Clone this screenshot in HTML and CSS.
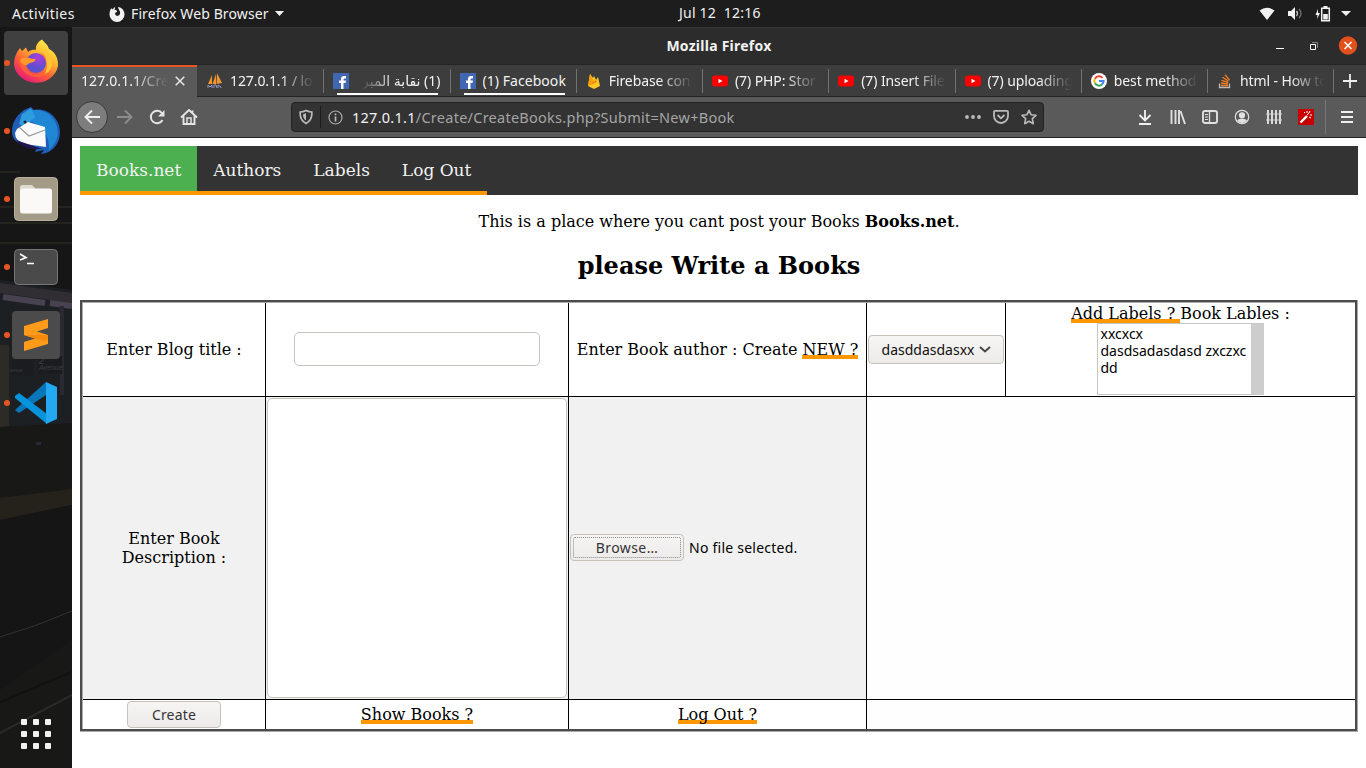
FILE: index.html
```html
<!DOCTYPE html>
<html lang="en">
<head>
<meta charset="utf-8">
<title>Mozilla Firefox</title>
<link rel="stylesheet" href="styles.css">
</head>
<body>
<div class="desktop">
<header class="topbar">
  <span class="activities">Activities</span>
  <svg class="ffmono" width="16" height="16" viewBox="0 0 16 16"><path d="M5.500 1C6.500 2 6 3 5 4C7 3.500 8 4.500 8 6C6.500 6 5.800 7 6.200 8.300C7.500 11.500 12 9.500 11 6C10.500 4 9.500 3.500 9 1C12 1 15.500 4 15.500 8.500A7.500 7.500 0 0 1 .5 8.500C.5 6 1 4 2.500 2L3 3.500C4 3 5 2 5.500 1Z" fill="#f2f2f2"/></svg>
  <span class="appname">Firefox Web Browser</span>
  <svg class="caret" width="9" height="5"><path d="M0 0H9L4.500 5Z" fill="#f2f2f2"/></svg>
  <span class="clock">Jul 12&nbsp; 12:16</span>
  <span class="tray">
    <svg width="16" height="16" viewBox="0 0 16 16"><path d="M.5 4.500Q8 -1 15.500 4.500L8 14Z" fill="#f2f2f2"/></svg>
    <svg width="16" height="16" viewBox="0 0 16 16"><path d="M1 5h3l4-4v13l-4-4H1Z" fill="#f2f2f2"/><path d="M9.500 5q2 2.500 0 5" fill="none" stroke="#ccc" stroke-width="1.300"/><path d="M12 3q4 4.500 0 9" fill="none" stroke="#777" stroke-width="1.200"/></svg>
    <svg width="16" height="18" viewBox="0 0 16 18"><path d="M3 4L.5 10h2l-.5 4 3-6H3Z" fill="#f2f2f2"/><path d="M6.700 3.200h7.600v12.600H6.700ZM8.500 1.700h4" fill="none" stroke="#f2f2f2" stroke-width="1.500"/><path d="M8.200 9h4.600v5.500H8.200Z" fill="#f2f2f2"/></svg>
    <svg class="traycaret" width="10" height="5"><path d="M0 0H10L5 5Z" fill="#f2f2f2"/></svg>
  </span>
</header>
<div class="body">
<aside class="dock">
  <svg class="wallpaper" width="72" height="741" viewBox="0 27 72 741">
    <path d="M0 27H72V768H0Z" fill="#161616"/>
    <path d="M0 172h20M0 207h72M0 223h72M0 243h72" stroke="#2b2921" stroke-width="1.500"/>
    <path d="M0 280L72 290V425L0 428Z" fill="#1d2023"/>
    <path d="M0 283L72 293V303L0 293Z" fill="#302e33"/>
    <path d="M3 297L45 303M50 303L72 306" stroke="#48414f" stroke-width="6"/>
    <path d="M62 306V395" stroke="#2a2830" stroke-width="4"/>
    <path d="M0 345H9V427H0Z" fill="#2c2b25"/>
    <path d="M12 360H34V376H12ZM38 356H62V374H38Z" fill="#1a1c1f"/>
    <text x="39" y="370" class="sign">Avenue</text><text x="9" y="372" class="sign small">venue</text><text x="39" y="364" class="sign two">2</text>
    <path d="M0 427L72 423V768H0Z" fill="#181816"/>
    <path d="M36 442h5v3h-5Z" fill="#252a3c"/>
    <path d="M0 498L72 489V505L0 520Z" fill="#25211b"/>
    <path d="M0 520L72 505V640L0 690Z" fill="#151515"/>
    <path d="M0 637Q35 627 72 611" fill="none" stroke="#333"/>
    <path d="M0 733L72 695" stroke="#2b2a26" stroke-width="2"/>
    <path d="M0 702L72 672" stroke="#121210" stroke-width="2"/>
  </svg>
  <div class="tile lit"><i class="dot"></i><svg width="48" height="48" viewBox="0 0 48 48">
    <defs><linearGradient id="fa" x1=".85" y1=".05" x2=".25" y2="1"><stop offset="0" stop-color="#fff44f"/><stop offset=".35" stop-color="#ffb52e"/><stop offset=".65" stop-color="#ff5c38"/><stop offset="1" stop-color="#e3147f"/></linearGradient><radialGradient id="fb" cx=".6" cy=".25"><stop offset="0" stop-color="#b13bdb"/><stop offset="1" stop-color="#5b50d0"/></radialGradient></defs>
    <path d="M30 .5C33 4 36 6 37 10C43 13 46.500 19 46 27A22.300 20.500 0 0 1 2 26C2 19 4 14 8 9L10 12L14 8.500L16 13C20 10 23 11 24 11C23 6 27 2 30 .5Z" fill="url(#fa)"/><path d="M7 20C12 16 19 20 24 20C22 24 18 23 15 26C14 35 27 39 33 31C37 25 31 18 28 13L36 18C40 30 34 39 24 38C13 37 7 29 7 20Z" fill="#ff6a33" opacity=".7"/><circle cx="24" cy="24" r="10" fill="url(#fb)"/><path d="M8 21C12 16 19 20 24 20.500C22 24 18 23 15 26Q10 27 8 21Z" fill="#ff9a2a"/><path d="M29 10Q36 12 39 18Q43 30 33 35Q37 25 33 17Z" fill="#ffc436"/></svg></div>
  <div class="tile"><i class="dot"></i><svg width="50" height="48" viewBox="0 0 50 48">
    <path d="M1 25C1 15 6 8 13 3L20 0L23 3C36 0 49 11 49 25C49 36 42 46 30 47L33 43L24 45L26 41C13 41 1 35 1 25Z" fill="#205db8"/><path d="M12 10C15 1 30 1 39 8C48 17 50 30 41 40L38 43Q40 22 12 10Z" fill="#2087d4"/><path d="M20 1L11 7L8 17L14 20L24 10Z" fill="#2d9de0"/><path d="M6 22L17 15L34 20L35 40L14 37Q4 34 4 26Z" fill="#fafafa"/><path d="M8 20L18 29L34 23" fill="none" stroke="#999" stroke-width="1.200"/><circle cx="14" cy="15" r="1.500" fill="#222"/><path d="M5 33L31 42L24 42Q11 42 5 33Z" fill="#20164d"/></svg></div>
  <div class="tile"><i class="dot"></i><svg width="44" height="44" viewBox="0 0 44 44"><rect x=".5" y=".5" width="43" height="43" rx="4" fill="#a39b86" stroke="#b9b19c"/><path d="M6 30V10Q6 8 8 8H18L21 11V16H6Z" fill="#dedacd"/><rect x="6" y="11.500" width="32" height="25" rx="2.500" fill="#faf9f7"/></svg></div>
  <div class="tile"><i class="dot"></i><svg width="44" height="36" viewBox="0 0 44 36"><rect x=".5" y=".5" width="43" height="35" rx="4" fill="#4a4a4a" stroke="#777"/><path d="M6 5L12 8.500L6 11M13 14.500H20" fill="none" stroke="#fff" stroke-width="1.700"/></svg></div>
  <div class="tile"><i class="dot"></i><svg width="48" height="48" viewBox="0 0 48 48"><rect width="48" height="48" rx="4" fill="#4b4b4b"/><path d="M12 15L36 8V17L25 20.500L36 24V33L12 40V31L23 27.500L12 24Z" fill="#ff9b1a"/><path d="M36 24V27Q36 30 32 30L23 27.500L12 24Z" fill="#f58a0c"/></svg></div>
  <div class="tile"><i class="dot"></i><svg width="42" height="42" viewBox="0 0 42 42"><path d="M0 28L31 0V13L4 31Z" fill="#0876b9"/><path d="M0 14L4 11L32 32V42L0 16Z" fill="#0794dc"/><path d="M31 0L42 5V37L31 42Z" fill="#23a8f2"/></svg></div>
  <div class="apps"><i></i><i></i><i></i><i></i><i></i><i></i><i></i><i></i><i></i></div>
</aside>
<main class="window">
  <div class="titlebar"><span>Mozilla Firefox</span>
    <svg class="controls" width="86" height="20" viewBox="0 0 86 20"><path d="M4 12.500h8" stroke="#fff"/><path d="M38.500 8.500h5v5h-5Z" fill="none" stroke="#fff"/><path d="M40 6.500h5.500V12" fill="none" stroke="#888"/><circle cx="76" cy="9.500" r="9.200" fill="#e2501c"/><path d="M72.500 6l7 7m0-7l-7 7" stroke="#fff" stroke-width="1.500"/></svg></div>
  <div class="tabs">
    <div class="tab active"><span class="label t0">127.0.1.1/Cre</span><svg width="10" height="10" viewBox="0 0 10 10"><path d="M.7 .7l8.600 8.600m0-8.600l-8.600 8.600" stroke="#e8e8e8" stroke-width="1.500"/></svg></div>
    <div class="tab"><svg width="16" height="16" viewBox="0 0 16 16"><path d="M1 11L5 2V11ZM5.500 11L9 1V11ZM9.500 11L10 0L15 10Z" fill="#ef962e"/><path d="M1 15V12l2 2 2-2v3m2 0v-3h2l1 3m1 0v-3l3 2v1" fill="none" stroke="#9292c4"/></svg><span class="label">127.0.1.1 / lo</span></div>
    <div class="tab media"><svg width="16" height="16"><path d="M0 0H16V16H0Z" fill="#4267b2"/><path d="M8 16v-6H6V7.500h2V6q0-3 3-3h2v2.500h-1.500q-1 0-1 1v1H13l-.5 2.500h-2v6Z" fill="#fff"/></svg><span class="label rtl" dir="rtl">(1) نقابة المبر</span></div>
    <div class="tab media"><svg width="16" height="16"><path d="M0 0H16V16H0Z" fill="#4267b2"/><path d="M8 16v-6H6V7.500h2V6q0-3 3-3h2v2.500h-1.500q-1 0-1 1v1H13l-.5 2.500h-2v6Z" fill="#fff"/></svg><span class="label full">(1) Facebook</span></div>
    <div class="tab"><svg width="16" height="16" viewBox="0 0 16 16"><path d="M2 13L4 1L7 5L8 3L10 7L12 4L14 13L8 16Z" fill="#ffca28"/><path d="M2 13L4 1L8 8Z" fill="#ffa000"/><path d="M2 13L10 7L11 9Z" fill="#f57c00"/></svg><span class="label">Firebase con</span></div>
    <div class="tab"><svg width="16" height="16"><rect y="2.500" width="16" height="11" rx="3" fill="#f00"/><path d="M6.500 5.800L10.500 8L6.500 10.200Z" fill="#fff"/></svg><span class="label">(7) PHP: Stor</span></div>
    <div class="tab"><svg width="16" height="16"><rect y="2.500" width="16" height="11" rx="3" fill="#f00"/><path d="M6.500 5.800L10.500 8L6.500 10.200Z" fill="#fff"/></svg><span class="label">(7) Insert File</span></div>
    <div class="tab"><svg width="16" height="16"><rect y="2.500" width="16" height="11" rx="3" fill="#f00"/><path d="M6.500 5.800L10.500 8L6.500 10.200Z" fill="#fff"/></svg><span class="label">(7) uploading</span></div>
    <div class="tab"><svg width="16" height="16" viewBox="0 0 16 16"><circle cx="8" cy="8" r="8" fill="#fff"/><g fill="none" stroke-width="2"><path d="M11.500 4.800A4.700 4.700 0 0 0 3.900 5.700" stroke="#ea4335"/><path d="M3.900 5.700a4.700 4.700 0 0 0 0 4.600" stroke="#fbbc05"/><path d="M3.900 10.300A4.700 4.700 0 0 0 11 11.500" stroke="#34a853"/><path d="M8 8h4.600a4.700 4.700 0 0 1-1.600 3.500" stroke="#4285f4"/></g></svg><span class="label">best method</span></div>
    <div class="tab"><svg width="16" height="16" viewBox="0 0 16 16"><path d="M2.500 10.500v4h10v-4" fill="none" stroke="#bcbbbb" stroke-width="1.300"/><path d="M4 12.500h7M4 10l7 .8M4.500 7.300l6.800 2M5.500 4.300l6 3.700M8 1.700l4.500 5.500" stroke="#f48024" stroke-width="1.300"/></svg><span class="label">html - How to</span></div>
    <div class="newtab"><svg width="14" height="14"><path d="M7 0v14M0 7h14" stroke="#eee" stroke-width="1.800"/></svg></div>
  </div>
  <div class="toolbar">
    <div class="back"><svg width="16" height="16" viewBox="0 0 16 16"><path d="M16 8H1.500M8 1.500L1.500 8L8 14.500" fill="none" stroke="#eee" stroke-width="1.900"/></svg></div>
    <svg class="g1" width="16" height="16" viewBox="0 0 16 16"><path d="M0 8h14.500M8 1.500L14.500 8L8 14.500" fill="none" stroke="#8d8d8d" stroke-width="1.900"/></svg>
    <svg class="g2" width="16" height="16" viewBox="0 0 16 16"><path d="M13 4.300A6.200 6.200 0 1 0 13.500 11" fill="none" stroke="#e4e4e4" stroke-width="2"/><path d="M15.500 1v6.500H9Z" fill="#e4e4e4"/></svg>
    <svg class="g3" width="18" height="16" viewBox="0 0 18 16"><path d="M1 8.500L9 1L17 8.500M3.500 7v8h11V7M12.500 1.500v3" fill="none" stroke="#e4e4e4" stroke-width="1.900"/><path d="M7 14V9h4v5" fill="none" stroke="#e4e4e4" stroke-width="1.500"/></svg>
    <div class="urlbar">
      <svg width="14" height="16" viewBox="0 0 14 16"><path d="M7 1.500Q10 3 12.800 3Q13.500 11 7 14.500Q.5 11 1.200 3Q4 3 7 1.500Z" fill="none" stroke="#bbb" stroke-width="1.700"/><path d="M7 4v7.500Q4 9.500 4 5.500Z" fill="#bbb"/></svg>
      <i class="rule"></i>
      <svg width="15" height="15" viewBox="0 0 15 15"><circle cx="7.500" cy="7.500" r="6.500" fill="none" stroke="#aaa" stroke-width="1.200"/><path d="M7.500 6.500v5M7.500 3.500v1.700" stroke="#bbb" stroke-width="1.700"/></svg>
      <span class="url"><b>127.0.1.1</b>/Create/CreateBooks.php?Submit=New+Book</span>
      <svg class="dots" width="16" height="16"><g fill="#bbb"><circle cx="2" cy="8" r="1.900"/><circle cx="8" cy="8" r="1.900"/><circle cx="14" cy="8" r="1.900"/></g></svg>
      <svg class="pocket" width="16" height="16"><path d="M2 1.800h12q1 0 1 1V7A7 7 0 0 1 1 7V2.800q0-1 1-1ZM4.500 6L8 9.300L11.500 6" fill="none" stroke="#bbb" stroke-width="1.800"/></svg>
      <svg class="star" width="16" height="16"><path d="M8 1.300L10 5.700L15 6.300L11.300 9.700L12.300 14.700L8 12.200L3.700 14.700L4.700 9.700L1 6.300L6 5.700Z" fill="none" stroke="#bbb" stroke-width="1.600" stroke-linejoin="round"/></svg>
    </div>
    <div class="tools">
      <svg width="16" height="16"><path d="M7 1v10M1.500 6L7 11.500L12.500 6M1 15h12" fill="none" stroke="#eee" stroke-width="1.900"/></svg>
      <svg width="16" height="16"><path d="M1.500 1v14M5.500 1v14M9 1v14M10.500 2L15 15" stroke="#e0e0e0" stroke-width="1.900"/></svg>
      <svg width="16" height="16"><rect x="1" y="2" width="14" height="12" rx="2" fill="none" stroke="#e0e0e0" stroke-width="1.900"/><path d="M7.500 2v12" stroke="#e0e0e0" stroke-width="1.300"/><path d="M3 5.500h3M3 8h3M3 10.500h3" stroke="#e0e0e0"/></svg>
      <svg width="16" height="16"><circle cx="8" cy="8" r="6.700" fill="none" stroke="#e0e0e0" stroke-width="1.200"/><circle cx="8" cy="6.300" r="3.100" fill="#e0e0e0"/><path d="M3 12Q4 9.500 8 9.800Q12 9.500 13 12Q8 16 3 12Z" fill="#e0e0e0"/></svg>
      <svg width="16" height="16"><path d="M2 1v14M6 1v14M10 1v14M14 1v14" stroke="#e0e0e0" stroke-width="1.900"/><path d="M0 5h16M0 11h16" stroke="#d0d0d0" stroke-width="1.200"/></svg>
      <svg width="16" height="16"><path d="M0 0H16V16H0Z" fill="#c90000"/><path d="M2.500 13.500L9 7" stroke="#fff" stroke-width="2.400"/><path d="M9 6l2-2M6 3l1 1M9 2v2M12 2l-1 2M12 6h2M11 8l2 1" stroke="#fff"/></svg>
    </div>
    <i class="sep"></i>
    <svg class="menu" width="12" height="12"><path d="M0 1h12M0 6h12M0 11h12" stroke="#eee" stroke-width="1.900"/></svg>
  </div>
  <section class="page">
    <nav class="nav"><a class="on">Books.net</a><a>Authors</a><a>Labels</a><a>Log Out</a></nav>
    <p>This is a place where you cant post your Books <b>Books.net</b>.</p>
    <h2>please Write a Books</h2>
    <div class="frame"><div class="mid"><div class="grid">
      <div class="cell">Enter Blog title :</div>
      <div class="cell"><div class="input"></div></div>
      <div class="cell">Enter Book author : Create&nbsp;<a class="link">NEW ?</a></div>
      <div class="cell"><div class="select"><span>dasddasdasxx</span><svg width="12" height="7"><path d="M1 1L6 5.500L11 1" fill="none" stroke="#444" stroke-width="2"/></svg></div></div>
      <div class="cell labels"><div><a class="link">Add Labels ?&nbsp;</a>Book Lables :</div><div class="list"><span>xxcxcx</span><span>dasdsadasdasd zxczxc</span><span>dd</span></div></div>
      <div class="cell gray">Enter Book<br>Description :</div>
      <div class="cell gray"><div class="area"></div></div>
      <div class="cell gray file"><span class="btn browse"><span>Browse…</span></span><span class="none">No file selected.</span></div>
      <div class="cell wide"></div>
      <div class="cell"><span class="btn create">Create</span></div>
      <div class="cell"><a class="link">Show Books ?</a></div>
      <div class="cell"><a class="link">Log Out ?</a></div>
      <div class="cell wide"></div>
    </div></div></div>
  </section>
</main>
</div>
</div>
</body>
</html>
```

FILE: styles.css
```css
* { box-sizing: border-box; }
body { margin: 0; overflow: hidden; }
svg { display: block; flex: none; }
.desktop { width: 1366px; height: 768px; display: flex; flex-direction: column; font-family: "Noto Sans", "DejaVu Sans", sans-serif; font-size: 14px; color: #f2f2f2; }
.topbar { height: 27px; flex: none; background: #1d1d1d; display: grid; grid-template-columns: 109px 22px 144px 399px 1fr auto; align-items: center; white-space: nowrap; }
.activities { padding: 0 0 1px 12px; letter-spacing: .45px; }
.appname { letter-spacing: .12px; padding-bottom: 1px; }
.clock { padding: 0 0 2px 5px; letter-spacing: .22px; }
.tray { display: flex; gap: 12px; align-items: center; padding-right: 15px; }
.traycaret { margin-left: -2px; }
.body { flex: 1; display: flex; }
.dock { width: 72px; height: 741px; position: relative; padding: 4px 4px 16px; display: flex; flex-direction: column; gap: 4px; }
.wallpaper { position: absolute; left: 0; top: 0; }
.sign { font: italic 7px "Liberation Sans", sans-serif; fill: #3b3d40; }
.small { font-size: 5px; }
.two { font-size: 10px; }
.tile { height: 64px; position: relative; border-radius: 4px; display: flex; align-items: center; justify-content: center; }
.lit { background: #404040; }
.dot { position: absolute; left: 0; top: 29px; width: 6px; height: 6px; border-radius: 50%; background: #e95420; }
.apps { position: relative; margin: auto auto 0; display: grid; grid-template-columns: repeat(3, 6px); gap: 6px; padding-bottom: 3px; }
.apps i { width: 6px; height: 6px; border-radius: 1px; background: #f2f2f2; }
.window { width: 1294px; display: flex; flex-direction: column; }
.titlebar { height: 37px; background: #2c2c2c; border-top: 1px solid #383838; display: grid; grid-template-columns: 86px 1fr 86px; align-items: center; font-weight: bold; font-size: 14px; padding-right: 8px; }
.titlebar span { grid-column: 2; text-align: center; padding: 0 0 2px 8px; letter-spacing: .25px; }
.tabs { height: 33px; background: #3d3d3d; border-top: 1px solid #252525; border-bottom: 1px solid #242424; display: flex; }
.tab { width: 126.25px; flex: none; display: flex; align-items: center; gap: 7px; padding: 0 9px 0 10px; position: relative; }
.tab::after { content: ""; position: absolute; right: -1px; top: 4px; width: 1px; height: 24px; background: #727272; }
.tab.active { width: 125px; background: #5a5a5a; border-top: 2px solid #e95420; height: 33px; padding: 0 12px 3px 9px; }
.tab.active::after { display: none; }
.label { width: 86px; overflow: hidden; white-space: nowrap; line-height: 24px; letter-spacing: -.1px; -webkit-mask-image: linear-gradient(90deg, #000 60%, transparent); mask-image: linear-gradient(90deg, #000 60%, transparent); }
.label.t0 { width: 88px; letter-spacing: .1px; }
.label.full { -webkit-mask-image: none; mask-image: none; letter-spacing: .05px; }
.label.rtl { -webkit-mask-image: linear-gradient(270deg, #000 55%, transparent 95%); mask-image: linear-gradient(270deg, #000 55%, transparent 95%); }
.media::before { content: ""; position: absolute; left: 14px; bottom: 1px; width: 101px; height: 2px; background: #fff; }
.newtab { flex: 1; display: flex; align-items: center; justify-content: center; }
.toolbar { height: 41px; background: #5a5a5a; border-bottom: 1px solid #222; display: flex; align-items: center; padding-left: 4px; }
.back { width: 32px; height: 32px; flex: none; border-radius: 50%; background: #7d7d7d; border: 1px solid #393939; display: flex; align-items: center; justify-content: center; }
.g1 { margin-left: 9px; }
.g2 { margin-left: 16px; }
.g3 { margin-left: 15px; }
.urlbar { margin-left: 93px; width: 753px; height: 30px; background: #333; border: 1px solid #222; border-radius: 4px; display: flex; align-items: center; padding: 0 6px 0 7px; color: #a5a5a5; }
.rule { width: 1px; height: 22px; background: #1c1c1c; margin: 0 7px; }
.url { margin-left: 9px; flex: 1; font-size: 14.5px; letter-spacing: .26px; }
.url b { font-weight: normal; color: #f4f4f4; }
.pocket, .star { margin-left: 12px; }
.tools { display: flex; margin-left: 94px; gap: 16px; }
.sep { width: 1px; height: 34px; background: #777; margin: 0 15px 0 11px; }
.page { flex: 1; background: #fff; padding: 8px; font-family: "DejaVu Serif", serif; font-size: 16px; color: #000; }
.nav { height: 49px; background: #333; display: flex; }
.nav a { color: #f2f2f2; font-size: 17px; line-height: 20px; padding: 14px 16px 11px; border-bottom: 4px solid #ff9800; }
.nav .on { background: #4caf50; }
.page p { margin: 17px 0 0; text-align: center; line-height: 19px; }
.page h2 { margin: 21px 0 0; text-align: center; font-size: 24px; line-height: 28px; }
.frame { margin-top: 20px; border: solid #aaa; border-width: 0 1px 1px 0; }
.mid { border: 2px solid #4c4c4c; }
.grid { border: solid #aaa; border-width: 1px 0 0 1px; background: #000; display: grid; grid-template-columns: 182px 302px 297px 138px 349px; grid-template-rows: 93px 302px 29px; gap: 1px; }
.cell { background: #fff; display: flex; align-items: center; justify-content: center; text-align: center; line-height: 19px; white-space: nowrap; min-width: 0; }
.gray { background: #f1f1f1; }
.wide { grid-column: span 2; background: #fefefe; }
.link { display: inline-block; height: 19px; line-height: 19px; background: linear-gradient(#ff9800, #ff9800) 0 100% / 100% 4px no-repeat; }
.input { width: 246px; height: 34px; margin-bottom: 2px; border: 1px solid #c7c4c0; border-radius: 5px; background: #fff; }
.area { width: 300px; height: 300px; border: 1px solid #c7c4c0; border-radius: 5px; background: #fff; }
.select, .btn { font-family: "Noto Sans", sans-serif; font-size: 14px; border: 1px solid #c7c1bb; border-radius: 4px; background: linear-gradient(#f6f5f4, #edebe9); display: flex; align-items: center; justify-content: center; }
.select { width: 136px; height: 29px; gap: 5px; color: #111; padding-left: 1px; }
.labels { flex-direction: column; justify-content: flex-start; padding-top: 1px; }
.list { width: 167px; height: 72px; margin-right: 1px; border: 1px solid #c5c5c5; border-right: 13px solid #cdcdcd; padding: 1px 3px; display: flex; flex-direction: column; text-align: left; line-height: 17px; font-family: "Noto Sans", sans-serif; font-size: 14px; }
.file { justify-content: flex-start; padding: 0 0 2px 1px; }
.browse { width: 114px; height: 27px; padding: 2px; color: #333; letter-spacing: .4px; }
.browse span { flex: 1; height: 21px; line-height: 20px; border: 1px dotted #888; border-radius: 2px; }
.none { font-family: "Noto Sans", sans-serif; font-size: 14px; margin-left: 5px; letter-spacing: .24px; }
.create { width: 94px; height: 27px; color: #333; letter-spacing: .2px; }
```
